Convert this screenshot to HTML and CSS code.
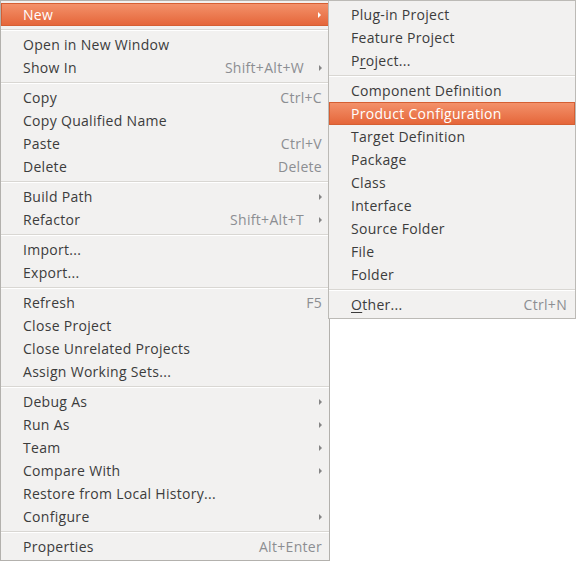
FILE: index.html
```html
<!DOCTYPE html>
<html>
<head>
<meta charset="utf-8">
<link rel="stylesheet" href="styles.css">
</head>
<body>
<div class="stage">
  <div class="menu main">
    <div class="item active"><span class="label">New</span><span class="arrow"></span></div>
    <div class="sep"></div>
    <div class="item"><span class="label">Open in New Window</span></div>
    <div class="item"><span class="label">Show In</span><span class="key">Shift+Alt+W</span><span class="arrow"></span></div>
    <div class="sep"></div>
    <div class="item"><span class="label">Copy</span><span class="key">Ctrl+C</span></div>
    <div class="item"><span class="label">Copy Qualified Name</span></div>
    <div class="item"><span class="label">Paste</span><span class="key">Ctrl+V</span></div>
    <div class="item"><span class="label">Delete</span><span class="key">Delete</span></div>
    <div class="sep"></div>
    <div class="item"><span class="label">Build Path</span><span class="arrow"></span></div>
    <div class="item"><span class="label">Refactor</span><span class="key">Shift+Alt+T</span><span class="arrow"></span></div>
    <div class="sep"></div>
    <div class="item"><span class="label">Import...</span></div>
    <div class="item"><span class="label">Export...</span></div>
    <div class="sep"></div>
    <div class="item"><span class="label">Refresh</span><span class="key">F5</span></div>
    <div class="item"><span class="label">Close Project</span></div>
    <div class="item"><span class="label">Close Unrelated Projects</span></div>
    <div class="item"><span class="label">Assign Working Sets...</span></div>
    <div class="sep"></div>
    <div class="item"><span class="label">Debug As</span><span class="arrow"></span></div>
    <div class="item"><span class="label">Run As</span><span class="arrow"></span></div>
    <div class="item"><span class="label">Team</span><span class="arrow"></span></div>
    <div class="item"><span class="label">Compare With</span><span class="arrow"></span></div>
    <div class="item"><span class="label">Restore from Local History...</span></div>
    <div class="item"><span class="label">Configure</span><span class="arrow"></span></div>
    <div class="sep"></div>
    <div class="item"><span class="label">Properties</span><span class="key">Alt+Enter</span></div>
  </div>
  <div class="menu sub">
    <div class="item"><span class="label">Plug-in Project</span></div>
    <div class="item"><span class="label">Feature Project</span></div>
    <div class="item"><span class="label">P<u>r</u>oject...</span></div>
    <div class="sep"></div>
    <div class="item"><span class="label">Component Definition</span></div>
    <div class="item active"><span class="label">Product Configuration</span></div>
    <div class="item"><span class="label">Target Definition</span></div>
    <div class="item"><span class="label">Package</span></div>
    <div class="item"><span class="label">Class</span></div>
    <div class="item"><span class="label">Interface</span></div>
    <div class="item"><span class="label">Source Folder</span></div>
    <div class="item"><span class="label">File</span></div>
    <div class="item"><span class="label">Folder</span></div>
    <div class="sep"></div>
    <div class="item"><span class="label"><u>O</u>ther...</span><span class="key">Ctrl+N</span></div>
  </div>
</div>
</body>
</html>
```
FILE: styles.css
```css
html, body {
  margin: 0;
  padding: 0;
  background: #ffffff;
}
.stage {
  position: relative;
  width: 576px;
  height: 561px;
  font-family: "Open Sans", "DejaVu Sans", sans-serif;
  font-size: 14px;
  letter-spacing: 0.3px;
  color: #3c3c3c;
}
.menu {
  box-sizing: border-box;
  background: #f2f1f0;
  border: 1px solid #b3b1ad;
  padding: 2px 0;
}
.main {
  width: 330px;
  height: 561px;
}
.sub {
  position: absolute;
  left: 328px;
  top: 0;
  width: 248px;
  height: 319px;
  border-color: #bcbab6;
}
.item {
  box-sizing: border-box;
  display: flex;
  align-items: center;
  height: 23px;
  line-height: 23px;
  padding: 0 7px 0 22px;
  white-space: nowrap;
}
.sub .item {
  padding-right: 8px;
}
.label {
  flex: 1;
}
.label u {
  text-decoration-thickness: 1px;
  text-underline-offset: 2px;
}
.key {
  color: #8c8e92;
}
.arrow {
  width: 0;
  height: 0;
  margin-left: 15px;
  border-left: 3px solid #858585;
  border-top: 3px solid transparent;
  border-bottom: 3px solid transparent;
}
.item.active {
  color: #ffffff;
  background: linear-gradient(#f3916a, #e5663a);
  border: 1px solid #d55f33;
  padding-left: 21px;
  padding-right: 6px;
}
.sub .item.active {
  padding-right: 7px;
}
.item.active .arrow {
  border-left-color: #ffffff;
  margin-right: 1px;
}
.sep {
  height: 0;
  margin: 3px 0 2px;
  border-top: 1px solid #d9d7d3;
  border-bottom: 1px solid #ffffff;
}
```
